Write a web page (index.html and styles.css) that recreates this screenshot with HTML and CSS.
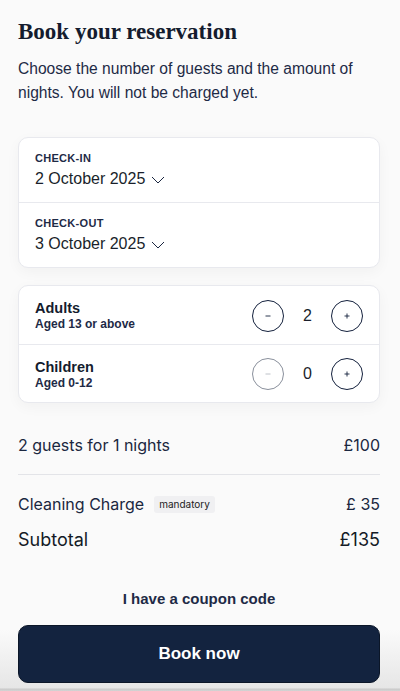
FILE: index.html
```html
<!DOCTYPE html>
<html lang="en">
<head>
<meta charset="utf-8">
<link rel="stylesheet" href="styles.css">
</head>
<body>
<main class="page">
  <h1 class="title">Book your reservation</h1>
  <p class="intro">Choose the number of guests and the amount of nights. You will not be charged yet.</p>

  <section class="card dates">
    <div class="date-row first">
      <div class="label">CHECK-IN</div>
      <div class="date">2 October 2025 <svg class="chev" viewBox="0 0 14 8" width="14" height="8"><path d="M1 1l6 6 6-6" fill="none" stroke="#1b2740" stroke-width="1"/></svg></div>
    </div>
    <div class="date-row">
      <div class="label">CHECK-OUT</div>
      <div class="date">3 October 2025 <svg class="chev" viewBox="0 0 14 8" width="14" height="8"><path d="M1 1l6 6 6-6" fill="none" stroke="#1b2740" stroke-width="1"/></svg></div>
    </div>
  </section>

  <section class="card guests">
    <div class="guest-row">
      <div class="guest-info">
        <div class="guest-name">Adults</div>
        <div class="guest-age">Aged 13 or above</div>
      </div>
      <div class="stepper">
        <button class="step"><svg viewBox="0 0 10 10" width="10" height="10"><path d="M2.5 5h5" stroke="currentColor" stroke-width="0.9"/></svg></button>
        <span class="count">2</span>
        <button class="step"><svg viewBox="0 0 10 10" width="10" height="10"><path d="M2.5 5h5M5 2.5v5" stroke="currentColor" stroke-width="0.9"/></svg></button>
      </div>
    </div>
    <div class="guest-row">
      <div class="guest-info">
        <div class="guest-name">Children</div>
        <div class="guest-age">Aged 0-12</div>
      </div>
      <div class="stepper">
        <button class="step disabled"><svg viewBox="0 0 10 10" width="10" height="10"><path d="M2.5 5h5" stroke="currentColor" stroke-width="0.9"/></svg></button>
        <span class="count">0</span>
        <button class="step"><svg viewBox="0 0 10 10" width="10" height="10"><path d="M2.5 5h5M5 2.5v5" stroke="currentColor" stroke-width="0.9"/></svg></button>
      </div>
    </div>
  </section>

  <section class="summary">
    <div class="line main">
      <span>2 guests for 1 nights</span>
      <span>£100</span>
    </div>
    <div class="line fee">
      <span class="fee-name">Cleaning Charge <span class="badge">mandatory</span></span>
      <span>£ 35</span>
    </div>
    <div class="line total">
      <span>Subtotal</span>
      <span>£135</span>
    </div>
  </section>

  <footer class="footer">
    <a class="coupon">I have a coupon code</a>
    <button class="book">Book now</button>
  </footer>
</main>
</body>
</html>
```

FILE: styles.css
```css
* { box-sizing: border-box; }
html, body { margin: 0; padding: 0; }
body {
  background: linear-gradient(to bottom, #fafafa 0, #fafafa 630px, #e6e6e6 688px, #c9c9c9 689px, #d4d4d4 691px);
  color: #1b2740;
  font-family: "Liberation Sans", Arial, sans-serif;
  height: 691px;
  overflow: hidden;
}
.page {
  padding: 17px 20px 0 18px;
  display: flex;
  flex-direction: column;
}
.title {
  font-family: "Liberation Serif", "Times New Roman", serif;
  font-weight: 700;
  font-size: 23px;
  line-height: 30px;
  margin: 0;
  color: #141c2e;
}
.intro {
  margin: 10px 0 0;
  font-size: 15.6px;
  line-height: 24px;
  color: #1e2a46;
}
.card {
  background: #fff;
  border: 1px solid #e8e9ee;
  border-radius: 10px;
  box-shadow: 0 4px 14px rgba(0,0,0,0.04);
}
.dates {
  margin-top: 32px;
}
.date-row {
  padding: 13px 16px 13px;
}
.date-row.first {
  border-bottom: 1px solid #e8e9ee;
}
.label {
  font-size: 11px;
  font-weight: 700;
  letter-spacing: 0.3px;
  line-height: 14px;
  color: #1e2a46;
}
.date {
  margin-top: 4px;
  font-size: 16px;
  line-height: 20px;
  color: #1a1f2b;
  display: flex;
  align-items: center;
  gap: 6px;
}
.chev { margin-top: 1px; }
.guests {
  margin-top: 17px;
}
.guest-row {
  display: flex;
  align-items: center;
  justify-content: space-between;
  height: 58px;
  padding: 1px 16px 0;
}
.guest-row + .guest-row {
  border-top: 1px solid #e8e9ee;
}
.guest-name {
  font-size: 14.5px;
  font-weight: 700;
  line-height: 18px;
  color: #141c2e;
}
.guest-age {
  font-size: 12px;
  font-weight: 700;
  line-height: 15px;
  color: #1e2a46;
}
.stepper {
  display: flex;
  align-items: center;
}
.step {
  width: 32px;
  height: 32px;
  border-radius: 50%;
  border: 1px solid #14213d;
  background: #fff;
  color: #14213d;
  display: flex;
  align-items: center;
  justify-content: center;
  padding: 0;
}
.step.disabled {
  border-color: #8a909c;
  color: #b7bbc3;
}
.count {
  width: 47px;
  text-align: center;
  font-size: 16px;
  color: #1a1f2b;
}
.summary {
  margin-top: 32px;
  font-family: Inter, "Liberation Sans", sans-serif;
}
.line {
  display: flex;
  justify-content: space-between;
  align-items: center;
  color: #1b2740;
}
.line.main {
  font-size: 16px;
  line-height: 20px;
  padding-bottom: 19px;
  border-bottom: 1px solid #e3e4e8;
}
.line.fee {
  margin-top: 19px;
  font-size: 16px;
  line-height: 20px;
}
.fee-name {
  display: flex;
  align-items: center;
  gap: 10px;
}
.badge {
  font-size: 10px;
  line-height: 17px;
  padding: 0 5px;
  background: #f0f0f2;
  border-radius: 3px;
  color: #222;
}
.line.total {
  margin-top: 14px;
  font-size: 18px;
  line-height: 24px;
  color: #141a26;
}
.footer {
  margin-top: 38px;
  display: flex;
  flex-direction: column;
  align-items: center;
}
.coupon {
  font-size: 15px;
  font-weight: 700;
  color: #1e2a46;
  line-height: 18px;
}
.book {
  margin-top: 17px;
  width: 100%;
  height: 58px;
  border-radius: 10px;
  background: #13233f;
  border: 1px solid #0b1628;
  color: #fff;
  font-family: "Liberation Sans", Arial, sans-serif;
  font-size: 17px;
  font-weight: 700;
}
```
